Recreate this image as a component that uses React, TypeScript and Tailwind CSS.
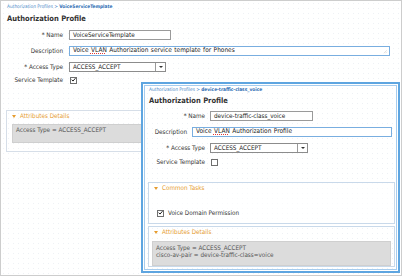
const FONT = "font-['DejaVu_Sans_Condensed','Liberation_Sans',Arial,sans-serif]";

function Check({ checked }: { checked?: boolean }) {
  return (
    <span className="flex h-[7px] w-[7px] shrink-0 items-center justify-center border border-[#6f6f6f] bg-white">
      {checked && (
        <svg viewBox="0 0 6 6" className="h-[6px] w-[6px]">
          <path d="M0.8 2.6 L2.4 4.3 L5.4 0.8" fill="none" stroke="#222" strokeWidth="1.2" />
        </svg>
      )}
    </span>
  );
}

function Select({ value, width }: { value: string; width: string }) {
  return (
    <div className={`flex h-[10px] items-center border border-[#8c8c8c] bg-white ${width}`}>
      <span className="flex-1 pl-[3px] text-[6.3px] leading-none text-[#222]">{value}</span>
      <span className="flex h-full w-[10px] items-center justify-center border-l border-[#9a9a9a]">
        <span className="h-0 w-0 border-x-[2px] border-t-[2.5px] border-x-transparent border-t-[#333]" />
      </span>
    </div>
  );
}

function SectionHead({ title }: { title: string }) {
  return (
    <div className="flex h-[11px] items-center gap-[4px] pl-[5px]">
      <span className="h-0 w-0 border-x-[2.5px] border-t-[3px] border-x-transparent border-t-[#e69c2f]" />
      <span className="text-[6.3px] leading-none text-[#e69c2f]">{title}</span>
    </div>
  );
}

function VoiceDesc({ text }: { text: string }) {
  return (
    <span className="text-[6.5px] [word-spacing:0.6px]">
      Voice{" "}
      <span className="underline decoration-[#e03a3a] decoration-dotted decoration-1 underline-offset-1">VLAN</span>{" "}
      {text}
    </span>
  );
}

export default function App() {
  return (
    <div
      className={`relative h-[276px] w-[402px] overflow-hidden border border-[#cdcdcd] bg-white bg-[radial-gradient(#eef1f5_0.7px,transparent_0.8px)] bg-[size:5px_5px] text-[#333] ${FONT}`}
    >
      {/* Back profile */}
      <div className="px-[6px] pt-[2px]">
        <div className="h-[8px] whitespace-nowrap text-[4.8px] leading-[8px] text-[#4a87c7]">
          Authorization Profiles &gt; <span className="font-bold text-[#2d6db3]">VoiceServiceTemplate</span>
        </div>
        <div className="mt-[3px] h-[10px] text-[7.5px] font-bold leading-[10px] text-[#333]">Authorization Profile</div>

        <div className="mt-[6px] flex h-[10px] items-center gap-[6px]">
          <span className="w-[56px] text-right text-[6.3px]">* Name</span>
          <div className="flex h-[10px] w-[102px] items-center border border-[#9a9a9a] bg-white pl-[3px] text-[6.3px] text-[#222]">
            VoiceServiceTemplate
          </div>
        </div>
        <div className="mt-[6px] flex h-[10px] items-center gap-[6px]">
          <span className="w-[56px] text-right text-[6.3px]">Description</span>
          <div className="relative flex h-[10px] w-[321px] items-center whitespace-nowrap border border-[#79aee0] bg-white pl-[3px] text-[#222]">
            <VoiceDesc text="Authorization service template for Phones" />
            <svg viewBox="0 0 6 6" className="absolute bottom-px right-px h-[5px] w-[5px]">
              <path d="M1 5 L5 1 M3 5 L5 3" stroke="#9a9a9a" strokeWidth="0.6" strokeDasharray="0.8 0.6" />
            </svg>
          </div>
        </div>
        <div className="mt-[6px] flex h-[10px] items-center gap-[6px]">
          <span className="w-[56px] text-right text-[6.3px]">* Access Type</span>
          <Select value="ACCESS_ACCEPT" width="w-[97px]" />
        </div>
        <div className="mt-[4px] flex h-[8px] items-center gap-[6px]">
          <span className="w-[56px] whitespace-nowrap text-right text-[6.3px]">Service Template</span>
          <span className="pl-px">
            <Check checked />
          </span>
        </div>

        <div className="ml-[-1px] mt-[26px] border border-[#d6dee8] pb-[8px]">
          <SectionHead title="Attributes Details" />
          <div className="mx-[5px] mt-[2px] h-[19px] border border-[#cfcfcf] bg-[#dcdcdc] pl-[3px] pt-px text-[6.3px] leading-[8px] text-[#555]">
            Access Type = ACCESS_ACCEPT
          </div>
        </div>
      </div>

      {/* Front profile window */}
      <div className="absolute left-[140px] top-[81px] h-[191px] w-[259px] border-2 border-[#5ea5e0] bg-white p-px">
        <div className="flex h-full flex-col border border-[#a6ccee] bg-white bg-[radial-gradient(#eef1f5_0.7px,transparent_0.8px)] bg-[size:5px_5px] px-[4px] pb-[2px]">
          <div className="h-[8px] whitespace-nowrap text-[4.8px] leading-[8px] text-[#4a87c7]">
            Authorization Profiles &gt; <span className="font-bold text-[#2d6db3]">device-traffic-class_voice</span>
          </div>
          <div className="mt-[2px] h-[10px] text-[7.5px] font-bold leading-[10px] text-[#333]">Authorization Profile</div>

          <div className="mt-[5px] flex h-[10px] items-center gap-[5px]">
            <span className="w-[56px] text-right text-[6.3px]">* Name</span>
            <div className="flex h-[10px] w-[103px] items-center border border-[#9a9a9a] bg-white pl-[3px] text-[6.3px] text-[#222]">
              device-traffic-class_voice
            </div>
          </div>
          <div className="mt-[6px] flex h-[10px] items-center gap-[5px]">
            <span className="w-[56px] text-right text-[6.3px]">Description</span>
            <div className="flex h-[10px] w-[200px] shrink-0 items-center whitespace-nowrap border border-[#79aee0] bg-white pl-[3px] text-[#222]">
              <VoiceDesc text="Authorization Profile" />
            </div>
          </div>
          <div className="mt-[6px] flex h-[10px] items-center gap-[5px]">
            <span className="w-[56px] text-right text-[6.3px]">* Access Type</span>
            <Select value="ACCESS_ACCEPT" width="w-[98px]" />
          </div>
          <div className="mt-[5px] flex h-[8px] items-center gap-[5px]">
            <span className="w-[56px] whitespace-nowrap text-right text-[6.3px]">Service Template</span>
            <span className="pl-px">
              <Check />
            </span>
          </div>

          <div className="ml-[-1px] mr-[-3px] mt-[16px] h-[43px] border border-[#c9d9ea] bg-white/60">
            <SectionHead title="Common Tasks" />
            <div className="mt-[15px] flex h-[8px] items-center gap-[4px] pl-[8px]">
              <Check checked />
              <span className="text-[6.3px] leading-none">Voice Domain Permission</span>
            </div>
          </div>

          <div className="ml-[-1px] mr-[-3px] mt-[2px] flex-1 border border-[#c9d9ea]">
            <SectionHead title="Attributes Details" />
            <div className="mx-[3px] mt-[3px] h-[25px] border border-[#cfcfcf] bg-[#dcdcdc] pl-[3px] pt-[2px] text-[6.3px] leading-[7px] text-[#555]">
              <div>Access Type = ACCESS_ACCEPT</div>
              <div className="whitespace-nowrap">cisco-av-pair = device-traffic-class=voice</div>
            </div>
          </div>
        </div>
      </div>
    </div>
  );
}
